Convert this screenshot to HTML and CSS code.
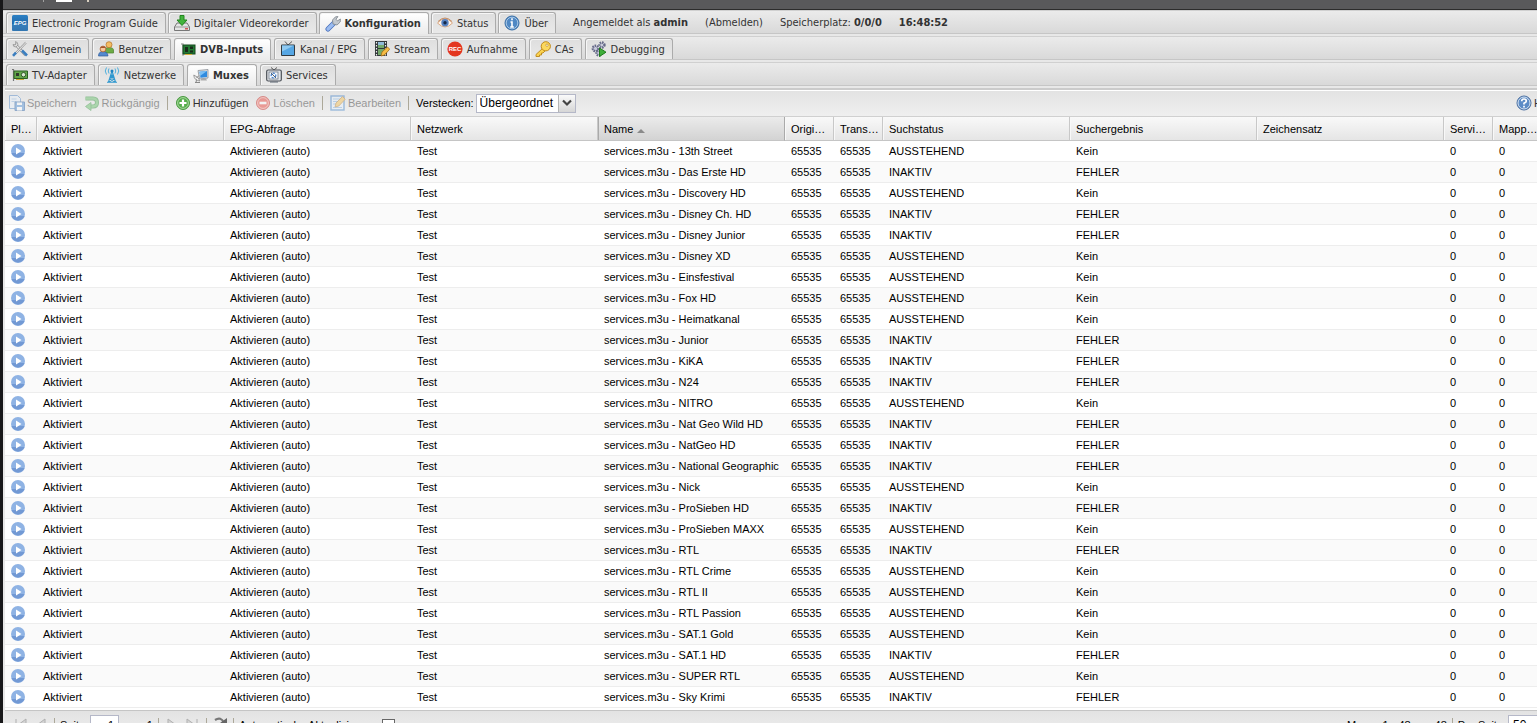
FILE: index.html
```html
<!DOCTYPE html>
<html lang="de">
<head>
    <meta charset="UTF-8">
    <meta name="viewport" content="width=device-width, initial-scale=1.0">
    <title>Tvheadend - Muxes</title>
    <link rel="stylesheet" href="styles.css">
</head>
<body>
    <div class="app">
        <div class="topbar">
            <span class="topbar-sep"></span>
            <span class="topbar-icon"></span>
            <span class="topbar-mark"></span>
        </div>

        <!-- Main tabs -->
        <nav class="tabs tabs-main">
            <button class="tab"><svg class="icon" viewBox="0 0 16 16"><defs><linearGradient id="epg" x2="0" y2="1"><stop stop-color="#2c80c4"/><stop offset="1" stop-color="#175796"/></linearGradient></defs><rect width="16" height="16" rx="1.5" fill="url(#epg)"/><path d="M0 9Q8 11 16 8V16H0Z" fill="#4e93cc" opacity=".5"/><text x="8" y="9.5" class="epg-text">EPG</text></svg>Electronic Program Guide</button>
            <button class="tab"><svg class="icon" viewBox="0 0 16 16"><path d="M3 8h10l2.5 4v3.5H.5V12Z" fill="#e4e4e4" stroke="#777"/><path d="M1 12h14" stroke="#999"/><path d="M11 13.8h3" stroke="#c33" stroke-width="1.2"/><path d="M6 .5h4V5h3L8 10.500 3 5h3Z" fill="#43b43d" stroke="#23861f"/></svg>Digitaler Videorekorder</button>
            <button class="tab active"><svg class="icon" viewBox="0 0 16 16"><path d="M3 13L9 7" stroke="#4970bd" stroke-width="5" stroke-linecap="round"/><path d="M3 13L9 7" stroke="#9bbcf0" stroke-width="3.400" stroke-linecap="round"/><path d="M8 8L7.500 4 10.500.8 13 .6 11 3.200l1.500 1.700L15.400 3 15.200 6 12 9Z" fill="#c3c9cf" stroke="#7c848c" stroke-width=".8"/></svg>Konfiguration</button>
            <button class="tab"><svg class="icon" viewBox="0 0 16 16"><path d="M.5 8Q8-.5 15.500 8 8 16 .5 8Z" fill="#fff4ea" stroke="#d8a984"/><circle cx="8" cy="7.800" r="3.700" fill="#5682c2"/><circle cx="8" cy="7.800" r="1.700" fill="#152848"/><path d="M1 6.500Q8-.5 15 6.500" fill="none" stroke="#c68e66"/></svg>Status</button>
            <button class="tab"><svg class="icon" viewBox="0 0 16 16"><circle cx="8" cy="8" r="7" fill="#4f88c4" stroke="#3a6ea5"/><circle cx="8" cy="8" r="5.800" fill="none" stroke="#bcd5ec" stroke-width=".8"/><path d="M8 3.200v2M6.500 7H8v5M6.200 12h3.600" fill="none" stroke="#fff" stroke-width="1.600"/></svg>Über</button>
            <span class="info">Angemeldet als <b>admin</b></span>
            <a class="info" href="#logout">(Abmelden)</a>
            <span class="info">Speicherplatz: <b>0/0/0</b></span>
            <span class="info"><b>16:48:52</b></span>
        </nav>

        <!-- Configuration tabs -->
        <nav class="tabs">
            <button class="tab"><svg class="icon" viewBox="0 0 16 16"><path d="M3 3L13.500 14" stroke="#8a8a8a" stroke-width="2.600"/><path d="M3 3L13.500 14" stroke="#e6e6e6" stroke-width="1.400"/><path d="M1 3.500Q1 6 4 6L6 4Q6 1 3.500.6L4 3 3 4Z" fill="#ddd" stroke="#888" stroke-width=".7"/><path d="M14 1.500L3 13" stroke="#999" stroke-width="2"/><path d="M14.500 1L4 12" stroke="#eee"/><path d="M1 14.800L4 11.500M10 9.500L15 14.500" stroke="#3b7fc0" stroke-width="2.600"/></svg>Allgemein</button>
            <button class="tab"><svg class="icon" viewBox="0 0 16 16"><path d="M6 11Q6 6.500 11 6.500T15.500 10V12H6Z" fill="#6dac45" stroke="#49802b" stroke-width=".7"/><circle cx="11" cy="3.700" r="3" fill="#f3bd62" stroke="#b9792d" stroke-width=".8"/><path d="M.5 15Q.5 10.500 5 10.500T10 15Z" fill="#5489cf" stroke="#315c9a" stroke-width=".7"/><circle cx="5" cy="8" r="2.900" fill="#f7c79a" stroke="#a65a29" stroke-width=".8"/><path d="M2.200 7Q5 3.500 7.800 7" fill="#a6562b"/></svg>Benutzer</button>
            <button class="tab active"><svg class="icon" viewBox="0 0 16 16"><path d="M1 2h2v12" fill="none" stroke="#aaa" stroke-width="1.300"/><rect x="3" y="3" width="12" height="9" fill="#237a34" stroke="#16491e"/><path d="M5 5h3v5H5ZM10 4.500h3v2.500h-3ZM10 8.500h3v2h-3Z" fill="#1b2b1c"/><path d="M5 12.500h7" stroke="#d4b03b"/></svg>DVB-Inputs</button>
            <button class="tab"><svg class="icon" viewBox="0 0 16 16"><path d="M5 .5L8 4 12 .5" fill="none" stroke="#555"/><rect x="1" y="3.500" width="14" height="11.500" rx="1" fill="#303a42"/><path d="M2 4.500h12v9.500H2Z" fill="#55a6e4"/><path d="M2 4.500h12L2 10.500Z" fill="#8fcaf2"/></svg>Kanal / EPG</button>
            <button class="tab"><svg class="icon" viewBox="0 0 16 16"><rect x="1" y="0" width="12" height="15" fill="#32383a"/><path d="M4 1h6v6H4ZM4 8h6v6H4Z" fill="#74a96b"/><path d="M4 1h6v3H4Z" fill="#8fbad8"/><path d="M2.500 1v14M11.500 1v14" stroke="#eee" stroke-width="1.200" stroke-dasharray="1.500 1.500"/><path d="M7 15l1-4 5.500-5 2.200 2.200L10.500 14Z" fill="#f5bd45" stroke="#a56e17" stroke-width=".8"/></svg>Stream</button>
            <button class="tab"><svg class="icon" viewBox="0 0 16 16"><circle cx="8" cy="8" r="7.600" fill="#e3361f"/><text x="8" y="10.300" class="rec-text">REC</text></svg>Aufnahme</button>
            <button class="tab"><svg class="icon" viewBox="0 0 16 16"><path d="M8 7L1 13.500V15.500H4.500V14H6.500V12H8L10.500 9.500Z" fill="#fbd34f" stroke="#b98517" stroke-width=".9"/><circle cx="10.800" cy="5.300" r="4.600" fill="#fbd85e" stroke="#c18b1c"/><circle cx="12" cy="4.200" r="1.200" fill="#fff" stroke="#b98517" stroke-width=".7"/></svg>CAs</button>
            <button class="tab"><svg class="icon" viewBox="0 0 16 16"><g fill="#c9cbdc" stroke="#666a88" stroke-width="2.400"><circle cx="11" cy="4" r="2.500" stroke-dasharray="1.500 .8"/><circle cx="4.500" cy="7.500" r="2.700" stroke-dasharray="1.500 .8"/><circle cx="8" cy="12" r="2.500" stroke-dasharray="1.500 .8"/></g><path d="M8.500 7v8.500L15 11.200Z" fill="#3fae3a" stroke="#1f7a1d"/></svg>Debugging</button>
        </nav>

        <!-- DVB input tabs -->
        <nav class="tabs">
            <button class="tab"><svg class="icon" viewBox="0 0 16 16"><path d="M0 2.500h1.500V14" fill="none" stroke="#777" stroke-width="1.200"/><path d="M2 4h13.500v7.500H2Z" fill="#63a84a" stroke="#2c5f22"/><path d="M4 6h3v3H4Z" fill="#2f3a2b"/><circle cx="11.500" cy="7.700" r="2.200" fill="#dbe8d2" stroke="#335a2a"/><path d="M4 12.500h8" stroke="#c9a93a"/></svg>TV-Adapter</button>
            <button class="tab"><svg class="icon" viewBox="0 0 16 16"><path d="M8 4L4.500 15M8 4l3.500 11M6.500 8h3M5.700 11h4.600M6.500 8l4 3.500M9.500 8l-4 3.500M4.500 15l6-3M11.500 15l-6-3M3 15.300h10" fill="none" stroke="#2f98cf" stroke-width="1.100"/><circle cx="8" cy="4" r="1.500" fill="#1c83c1"/><path d="M5 1.500Q3.500 4 5 6.500M11 1.500Q12.500 4 11 6.500M2.500.5Q0 4 2.500 7.500M13.500.5Q16 4 13.500 7.500" fill="none" stroke="#4fb0de"/></svg>Netzwerke</button>
            <button class="tab active"><svg class="icon" viewBox="0 0 16 16"><path d="M5 2.500L15 1.500V10L6.500 11Z" fill="#d9dde2" stroke="#8b9097" stroke-width=".8"/><path d="M6.500 3.700L14 3V9L7.500 9.800Z" fill="#2f8be0"/><path d="M6.500 3.700L14 3 7 8Z" fill="#7cc0f5"/><path d="M8 11l5-.5 1 2H8Z" fill="#aaa"/><path d="M.8 7Q1 12.500 7 13 6 9 .8 7Z" fill="#eee" stroke="#888" stroke-width=".8"/><path d="M2 14.500h5M3.500 11.500L3 14.500M3.500 10L6 7.500" stroke="#888"/></svg>Muxes</button>
            <button class="tab"><svg class="icon" viewBox="0 0 16 16"><path d="M5 .5L8 3 11 .5" fill="none" stroke="#555"/><rect x=".7" y="3" width="14.600" height="11" rx="1.500" fill="#e3e5e8" stroke="#4a4f56" stroke-width="1.200"/><rect x="3" y="5" width="9" height="7" fill="#f5f9ff" stroke="#6c7885" stroke-width=".8"/><circle cx="7.500" cy="8.500" r="2.300" fill="none" stroke="#3b7ac8" stroke-width="1.200" stroke-dasharray="2 1"/><path d="M5 6l5 5M4 15h8" stroke="#5a6470"/></svg>Services</button>
        </nav>

        <!-- Grid actions -->
        <div class="toolbar">
            <button class="action" disabled><svg class="icon" viewBox="0 0 16 16"><path d="M.5.5h8l3 3v10h-11Z" fill="#e9f2fc" stroke="#4f88c9"/><path d="M2.500 4h5M2.500 6.500h5" stroke="#8db6e2"/><path d="M6 7h9.500v8.500H6Z" fill="#4d8ed6" stroke="#235a9f"/><path d="M8 7.500h5V10H8ZM8 12h5v3.500H8Z" fill="#fff"/></svg>Speichern</button>
            <button class="action" disabled><svg class="icon" viewBox="0 0 16 16"><path d="M1.500 3.500H9Q13 3.500 13 7.500T9 11.500H6" fill="none" stroke="#2c8d37" stroke-width="4"/><path d="M1.500 3.500H9Q13 3.500 13 7.500T9 11.500H6" fill="none" stroke="#62bf65" stroke-width="2.400"/><path d="M7 7.500v8L1.500 11.500Z" fill="#62bf65" stroke="#2c8d37" stroke-width=".8"/></svg>Rückgängig</button>
            <span class="sep"></span>
            <button class="action"><svg class="icon" viewBox="0 0 16 16"><circle cx="8" cy="8" r="6.500" fill="#56ad4b" stroke="#4a9a41"/><circle cx="8" cy="8" r="5.400" fill="none" stroke="#bfe2b8" stroke-width=".8"/><path d="M8 4.500v7M4.500 8h7" stroke="#fff" stroke-width="2.200"/></svg>Hinzufügen</button>
            <button class="action" disabled><svg class="icon" viewBox="0 0 16 16"><circle cx="8" cy="8" r="6.500" fill="#e83a30" stroke="#c31f1a"/><circle cx="8" cy="8" r="5.400" fill="none" stroke="#ffbdb5" stroke-width=".8"/><path d="M4.500 8h7" stroke="#fff" stroke-width="2.600"/></svg>Löschen</button>
            <span class="sep"></span>
            <button class="action" disabled><svg class="icon" viewBox="0 0 16 16"><rect x="1" y="1" width="13" height="14" fill="#e8f2fc" stroke="#3b7fc8" stroke-width="1.400"/><path d="M3 4h7M3 6.500h5M3 9h3M3 12.500h9" stroke="#80afe0"/><path d="M5 12l1-4 6.500-6.500 2.700 2.700L8.800 11Z" fill="#f6c04e" stroke="#ad701c" stroke-width=".8"/></svg>Bearbeiten</button>
            <span class="sep"></span>
            <div class="filter">
                <label for="hidemode">Verstecken:</label>
                <span class="combo">
                    <select id="hidemode">
                        <option>Übergeordnet</option>
                        <option>Alle</option>
                        <option>Keine</option>
                    </select>
                    <span class="combo-arrow"><svg viewBox="0 0 10 8"><path d="M1 1.500L5 5.500 9 1.500" fill="none" stroke="#444" stroke-width="2.200"/></svg></span>
                </span>
            </div>
            <button class="action help"><svg class="icon" viewBox="0 0 16 16"><circle cx="8" cy="8" r="7" fill="#5d8cc6" stroke="#44699c"/><circle cx="8" cy="8" r="6" fill="none" stroke="#d5e2f1"/><path d="M5.700 6.300Q5.700 4 8 4T10.300 6Q10.300 7.200 8 8.300V9.500M8 10.800V12.500" fill="none" stroke="#fff" stroke-width="1.700"/></svg>Hilfe</button>
        </div>

        <table class="grid">
            <colgroup>
                <col class="col-play">
                <col class="col-wide"><col class="col-wide"><col class="col-wide"><col class="col-wide">
                <col class="col-num"><col class="col-num">
                <col class="col-wide"><col class="col-wide"><col class="col-wide">
                <col class="col-num"><col class="col-num"><col>
            </colgroup>
            <thead>
                <tr>
                    <th>Play-Link</th>
                    <th>Aktiviert</th>
                    <th>EPG-Abfrage</th>
                    <th>Netzwerk</th>
                    <th class="sorted">Name<span class="sort-arrow"></span></th>
                    <th>Original-Netzwerk-ID</th>
                    <th>Transportstream-ID</th>
                    <th>Suchstatus</th>
                    <th>Suchergebnis</th>
                    <th>Zeichensatz</th>
                    <th>Services</th>
                    <th>Mapped Services</th>
                    <th></th>
                </tr>
            </thead>
            <tbody id="muxes"></tbody>
        </table>

        <div class="paging">
            <button class="page-btn" aria-label="Erste Seite" disabled><svg class="icon" viewBox="0 0 16 16"><path d="M4 2v12M14 2v12L6 8Z" fill="#ccc" stroke="#999"/></svg></button>
            <button class="page-btn" aria-label="Vorherige Seite" disabled><svg class="icon" viewBox="0 0 16 16"><path d="M12 2v12L4 8Z" fill="#ccc" stroke="#999"/></svg></button>
            <span class="sep"></span>
            <label for="page">Seite</label>
            <input class="page-input" id="page" type="text" value="1">
            <span class="page-total">von 1</span>
            <span class="sep"></span>
            <button class="page-btn" aria-label="Nächste Seite" disabled><svg class="icon" viewBox="0 0 16 16"><path d="M4 2v12L12 8Z" fill="#ccc" stroke="#999"/></svg></button>
            <button class="page-btn" aria-label="Letzte Seite" disabled><svg class="icon" viewBox="0 0 16 16"><path d="M2 2v12L10 8ZM12 2v12" fill="#ccc" stroke="#999"/></svg></button>
            <span class="sep"></span>
            <button class="page-btn" aria-label="Aktualisieren"><svg class="icon" viewBox="0 0 16 16"><path d="M3 3Q9-1 12 6" fill="none" stroke="#777" stroke-width="2.200"/><path d="M8 6h7V1Z" fill="#666"/><path d="M13 12Q7 17 4 10" fill="none" stroke="#777" stroke-width="2.200"/></svg></button>
            <span class="sep"></span>
            <label for="autorefresh">Automatische Aktualisierung</label>
            <input class="check" id="autorefresh" type="checkbox">
            <span class="page-info">Muxes 1 - 48 von 48</span>
            <span class="sep"></span>
            <label for="perpage">Per Seite</label>
            <input class="per-page" id="perpage" type="text" value="50">
        </div>
    </div>

    <script>
        // true = scan finished with an error, false = scan pending
        const muxes = [
            ['13th Street', false],
            ['Das Erste HD', true],
            ['Discovery HD', false],
            ['Disney Ch. HD', true],
            ['Disney Junior', true],
            ['Disney XD', false],
            ['Einsfestival', false],
            ['Fox HD', false],
            ['Heimatkanal', false],
            ['Junior', true],
            ['KiKA', true],
            ['N24', true],
            ['NITRO', false],
            ['Nat Geo Wild HD', true],
            ['NatGeo HD', true],
            ['National Geographic', true],
            ['Nick', false],
            ['ProSieben HD', true],
            ['ProSieben MAXX', false],
            ['RTL', true],
            ['RTL Crime', false],
            ['RTL II', false],
            ['RTL Passion', false],
            ['SAT.1 Gold', false],
            ['SAT.1 HD', true],
            ['SUPER RTL', false],
            ['Sky Krimi', true]
        ];

        const play = '<a class="play" href="#play" aria-label="Play"><svg viewBox="0 0 16 16"><circle cx="7" cy="8" r="7" fill="#8fb3e4"/><path d="M.5 10a7 7 0 0 0 13 0Z" fill="#7299d4"/><path d="M5 4.500v7L10.500 8Z" fill="#fff"/></svg></a>';

        document.getElementById('muxes').innerHTML = muxes.map(([name, failed]) => {
            const cells = [
                play, 'Aktiviert', 'Aktivieren (auto)', 'Test', 'services.m3u - ' + name,
                '65535', '65535',
                failed ? 'INAKTIV' : 'AUSSTEHEND',
                failed ? 'FEHLER' : 'Kein',
                '', '0', '0', ''
            ];
            return '<tr>' + cells.map(cell => `<td>${cell}</td>`).join('') + '</tr>';
        }).join('');
    </script>
</body>
</html>
```
FILE: styles.css
```css
* {
    box-sizing: border-box;
}
body {
    margin: 0;
    height: 100vh;
    overflow: hidden;
    font-family: "Liberation Sans", Arial, sans-serif;
    font-size: 11px;
    color: #000;
    background-color: #e8e8e8;
}
button, input, select {
    font: inherit;
    color: inherit;
    margin: 0;
}
button {
    padding: 0;
    border: none;
    background: none;
    white-space: nowrap;
}
.app {
    min-width: 1560px;
    border-left: 3px solid #18181a;
}
.icon {
    width: 16px;
    height: 16px;
    flex: none;
}
.topbar {
    display: flex;
    align-items: flex-start;
    height: 10px;
    padding-left: 40px;
    background-color: #59595b;
    border-bottom: 1px solid #2c2c2c;
}
.topbar-sep {
    width: 1px;
    height: 2px;
    background-color: #a0a0a0;
}
.topbar-icon {
    width: 16px;
    height: 2px;
    margin-left: 12px;
    background-color: #fff;
}
.topbar-mark {
    width: 2px;
    height: 2px;
    margin-left: 15px;
    background-color: #d8cfc0;
}

/* Tab strips */
.tabs {
    display: flex;
    gap: 3px;
    margin-bottom: 2px;
    padding: 1px 0 0 3px;
    border-top: 1px solid #d0d0d0;
    border-bottom: 1px solid #c6c6c6;
    background: linear-gradient(#ebebeb, #d9d9d9);
    font-family: "DejaVu Sans Condensed", Tahoma, sans-serif;
    color: #333;
}
.tabs-main {
    gap: 2px;
}
.tab {
    display: flex;
    align-items: center;
    gap: 4px;
    height: 21px;
    padding: 0 7px 0 5px;
    border: 1px solid #ababab;
    border-bottom: none;
    border-radius: 3px 3px 0 0;
    background: linear-gradient(#dedede, #e9e9e9);
    box-shadow: inset 1px 1px 0 #f6f6f6;
}
.tab.active {
    margin-bottom: -1px;
    height: 22px;
    font-weight: bold;
    background: linear-gradient(#fff, #ebebeb);
}
.info {
    margin-left: 15px;
    line-height: 21px;
    color: #333;
    text-decoration: none;
}
.epg-text, .rec-text {
    font-family: "Liberation Sans", Arial, sans-serif;
    font-weight: bold;
    text-anchor: middle;
    fill: #fff;
}
.epg-text {
    font-size: 6px;
    font-style: italic;
}
.rec-text {
    font-size: 6px;
}

/* Toolbar */
.toolbar {
    display: flex;
    align-items: center;
    gap: 7px;
    height: 29px;
    margin-left: 2px;
    padding: 0 4px;
    border-top: 2px solid #cbcbcb;
    border-bottom: 1px solid #d0d0d0;
    background: linear-gradient(#fff 1px, #e3e3e3 1px, #efefef);
}
.action {
    display: flex;
    align-items: center;
    gap: 2px;
    color: #333;
}
.action:disabled {
    opacity: 0.45;
}
.help {
    margin-left: auto;
}
.sep {
    width: 1px;
    height: 14px;
    background-color: #aca899;
}
.filter {
    display: flex;
    align-items: center;
    gap: 2px;
}
.combo {
    position: relative;
}
.combo select {
    display: block;
    width: 100px;
    height: 19px;
    padding: 0 18px 0 3px;
    border: 1px solid #b5b8c8;
    border-radius: 0;
    background-color: #fff;
    font-size: 12px;
    appearance: none;
}
.combo-arrow {
    position: absolute;
    top: 1px;
    right: 1px;
    bottom: 1px;
    display: flex;
    align-items: center;
    justify-content: center;
    width: 17px;
    border-left: 1px solid #b5b5b5;
    background: linear-gradient(#fafafa, #d6d6d6);
    pointer-events: none;
}
.combo-arrow svg {
    width: 10px;
    height: 8px;
}

/* Grid */
.grid {
    width: calc(100% - 2px);
    margin-left: 2px;
    border-spacing: 0;
    table-layout: fixed;
    border-bottom: 2px solid #fff;
    background-color: #fff;
}
.col-play {
    width: 32px;
}
.col-wide {
    width: 187px;
}
.col-num {
    width: 49px;
}
.grid th, .grid td {
    padding: 0 2px 0 6px;
    overflow: hidden;
    text-align: left;
    text-overflow: ellipsis;
    white-space: nowrap;
}
.grid th {
    height: 24px;
    border-right: 1px solid #c8c8c8;
    border-bottom: 1px solid #c5c5c5;
    background: linear-gradient(#f9f9f9, #e5e5e5);
    box-shadow: inset 1px 0 0 #f8f8f8;
    font-weight: normal;
}
.grid th.sorted {
    border-right-color: #aaa;
    background: linear-gradient(#ebebeb, #d3d3d3);
    box-shadow: inset 1px 0 0 #aaa;
}
.sort-arrow {
    display: inline-block;
    margin-left: 4px;
    border: 4px solid transparent;
    border-top: none;
    border-bottom-color: #8a8a8a;
}
.grid td {
    height: 21px;
    border-bottom: 1px solid #ededed;
}
.grid tr:nth-child(even) td {
    background-color: #fafafa;
}
.play svg {
    display: block;
    width: 16px;
    height: 16px;
}

/* Paging bar */
.paging {
    display: flex;
    align-items: center;
    gap: 5px;
    height: 29px;
    margin-left: 2px;
    padding: 0 7px;
    border-top: 1px solid #c5c5c5;
    background: linear-gradient(#e3e3e3, #efefef);
}
.page-btn {
    display: flex;
}
.page-btn:disabled {
    opacity: 0.7;
}
.page-input, .per-page {
    height: 20px;
    border: 1px solid #b5b8c8;
    background-color: #fff;
}
.page-input {
    width: 29px;
    padding: 0 4px;
    text-align: right;
}
.page-total {
    margin-left: 2px;
}
.check {
    width: 13px;
    height: 13px;
    border: 1px solid #666;
    background-color: #fff;
    appearance: none;
}
.check:checked {
    background-color: #4d8ed6;
}
.page-info {
    margin-left: auto;
}
.per-page {
    width: 45px;
    padding: 0 4px;
    font-size: 12px;
}
```
